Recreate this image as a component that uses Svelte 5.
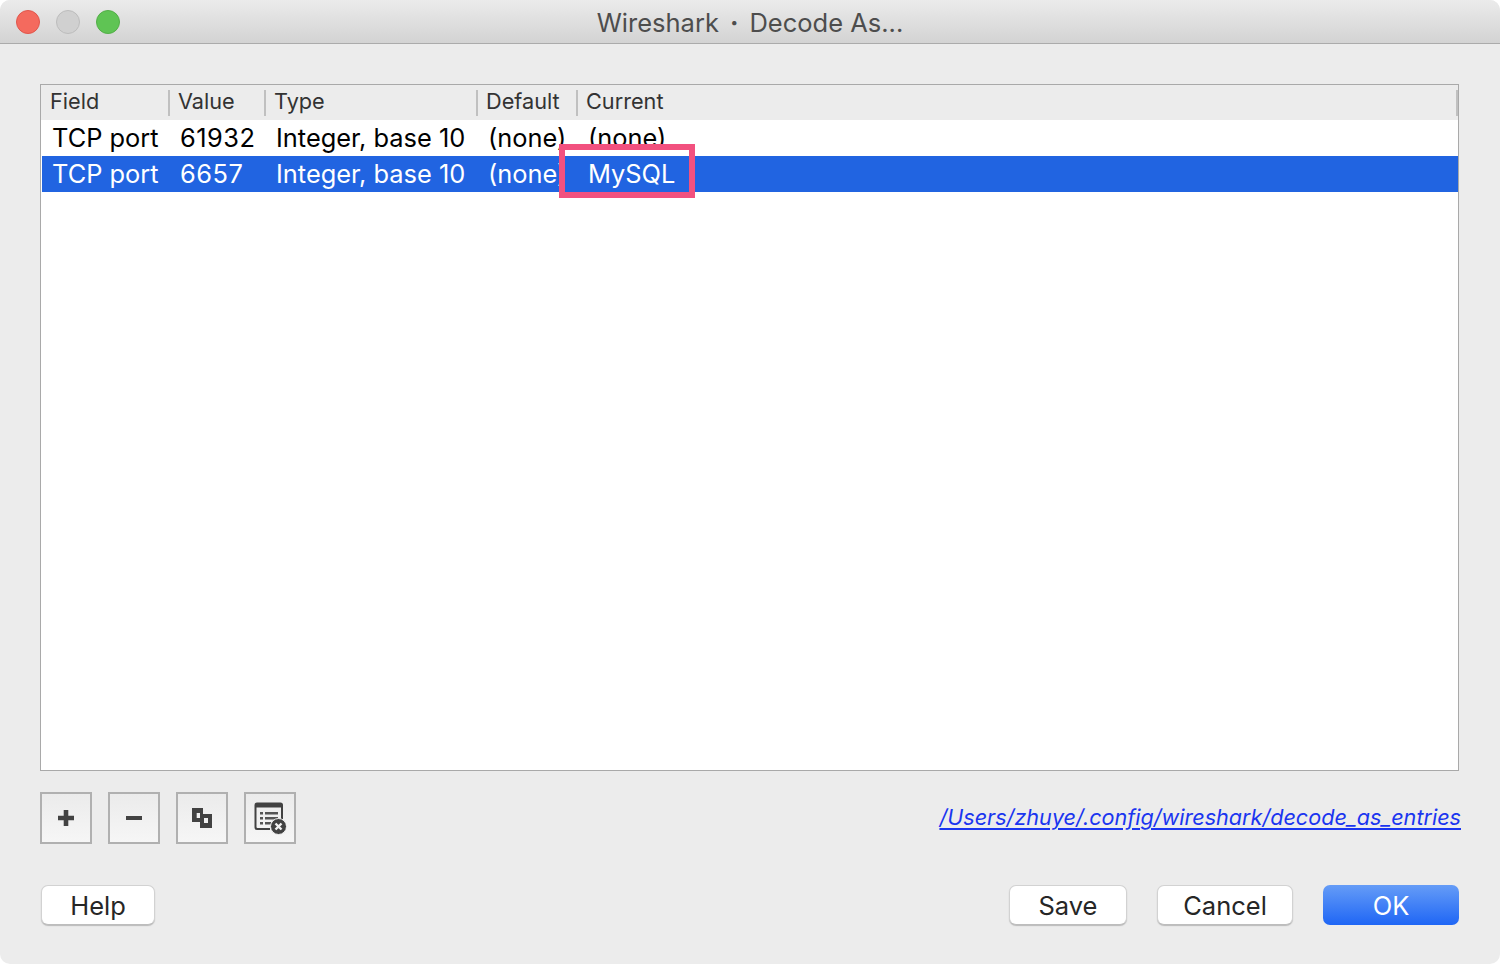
<script>
	const columns = ['Field', 'Value', 'Type', 'Default', 'Current'];
	const rows = [
		{ field: 'TCP port', value: '61932', type: 'Integer, base 10', def: '(none)', current: '(none)', selected: false },
		{ field: 'TCP port', value: '6657', type: 'Integer, base 10', def: '(none)', current: 'MySQL', selected: true }
	];
</script>

<div class="window">
	<header class="titlebar">
		<div class="lights">
			<span class="light red"></span>
			<span class="light grey"></span>
			<span class="light green"></span>
		</div>
		<div class="title">Wireshark<span class="dot">·</span>Decode As...</div>
	</header>

	<main class="content">
		<div class="table">
			<div class="head grid">
				{#each columns as col}
					<div class="th">{col}</div>
				{/each}
			</div>
			{#each rows as row}
				<div class="row grid" class:selected={row.selected}>
					<div class="td">{row.field}</div>
					<div class="td num">{row.value}</div>
					<div class="td">{row.type}</div>
					<div class="td">{row.def}</div>
					<div class="td">{row.current}</div>
				</div>
			{/each}
			<div class="callout"></div>
		</div>

		<div class="tools">
			<button class="tool" aria-label="Add">
				<svg width="18" height="18" viewBox="0 0 18 18"><path d="M6.700 1h4.600v5.700H17v4.600h-5.700V17H6.700v-5.700H1V6.700h5.700z" fill="#424242"/></svg>
			</button>
			<button class="tool" aria-label="Remove">
				<svg width="18" height="18" viewBox="0 0 18 18"><rect x="1" y="7" width="16" height="4" fill="#424242"/></svg>
			</button>
			<button class="tool" aria-label="Copy">
				<svg width="22" height="24" viewBox="0 0 22 24"><path fill-rule="evenodd" d="M1 2h11v6h9v14H9v-6H1zM5.700 7v5H9V8h0V7zM13 12v5h4v-5z" fill="#424242"/></svg>
			</button>
			<button class="tool" aria-label="Clear">
				<svg width="34" height="34" viewBox="0 0 34 34">
					<path d="M4 1.500h23.500a2.500 2.500 0 0 1 2.500 2.500V18h-2V6.500H3.500V26a1 1 0 0 0 1 1H17v2H4a2.500 2.500 0 0 1-2.500-2.500V4A2.500 2.500 0 0 1 4 1.500z" fill="#424242"/>
					<path d="M7 11h3v2.500H7zM12 11h13v2.500H12zM7 16h3v2.500H7zM12 16h13v2.500H12zM7 21h3v2.500H7zM12 21h6v2.500h-6z" fill="#555"/>
					<circle cx="25.500" cy="25.500" r="8" fill="#424242" stroke="#f2f2f2" stroke-width="1"/>
					<path d="M22.500 22.500l6 6M28.500 22.500l-6 6" stroke="#f2f2f2" stroke-width="2.400" fill="none"/>
				</svg>
			</button>
			<a class="path" href="#entries">/Users/zhuye/.config/wireshark/decode_as_entries</a>
		</div>

		<div class="actions">
			<button class="btn help">Help</button>
			<div class="spacer"></div>
			<button class="btn save">Save</button>
			<button class="btn cancel">Cancel</button>
			<button class="btn ok">OK</button>
		</div>
	</main>
</div>

<style>
	:global(body) {
		margin: 0;
		background: #fff;
	}

	.window {
		width: 1500px;
		height: 964px;
		background: #ececec;
		border-radius: 10px;
		overflow: hidden;
		font-family: Inter, "Liberation Sans", sans-serif;
		color: #262626;
	}

	.titlebar {
		position: relative;
		height: 43px;
		display: flex;
		align-items: center;
		justify-content: center;
		background: linear-gradient(#ebebeb, #d3d3d3);
		border-bottom: 1px solid #ababab;
	}

	.lights {
		position: absolute;
		left: 16px;
		top: 10px;
		display: flex;
		gap: 16px;
	}

	.light {
		width: 24px;
		height: 24px;
		border-radius: 50%;
		box-sizing: border-box;
		border: 1px solid;
	}

	.red {
		background: #f46a5e;
		border-color: #e0564c;
	}

	.grey {
		background: #d0d0d0;
		border-color: #bcbcbc;
	}

	.green {
		background: #5fc454;
		border-color: #53ae48;
	}

	.title {
		font-size: 25.500px;
		padding-top: 2px;
		color: #4d4d4d;
	}

	.dot {
		margin: 0 11px;
		font-weight: 700;
	}

	.content {
		padding: 40px 41px 0 40px;
	}

	.table {
		position: relative;
		box-sizing: border-box;
		width: 1419px;
		height: 687px;
		background: #fff;
		border: 1px solid #a9a9a9;
	}

	.grid {
		display: grid;
		grid-template-columns: 129px 96px 212px 100px 1fr;
	}

	.head {
		height: 35px;
		background: #ececec;
		align-items: center;
	}

	.th {
		height: 26px;
		line-height: 22px;
		padding-left: 8px;
		font-size: 21.700px;
		color: #333;
		border-right: 2px solid #c0c0c0;
	}

	.th:first-child {
		padding-left: 9px;
	}

	.row {
		height: 36px;
		margin-left: 1px;
		color: #000;
		background: #fff;
	}

	.td {
		padding-left: 9px;
		font-size: 25.400px;
		line-height: 36px;
		white-space: nowrap;
		overflow: hidden;
	}

	.td:first-child {
		padding-left: 10px;
	}

	.num {
		letter-spacing: 0.5px;
	}

	.selected {
		background: #2164e1;
		color: #fff;
	}

	.callout {
		position: absolute;
		left: 518px;
		top: 59px;
		width: 136px;
		height: 54px;
		box-sizing: border-box;
		border: 6px solid #f2517f;
	}

	.tools {
		display: flex;
		align-items: center;
		gap: 16px;
		margin-top: 21px;
		height: 52px;
	}

	.tool {
		width: 52px;
		height: 52px;
		padding: 0;
		display: flex;
		align-items: center;
		justify-content: center;
		background: linear-gradient(#ebebeb, #f6f6f6);
		border: 2px solid #b0b0b0;
		border-radius: 0;
	}

	.path {
		margin-left: auto;
		margin-right: -2px;
		padding-bottom: 2px;
		font-size: 21.600px;
		font-style: italic;
		color: #1a35f0;
		text-decoration-thickness: 2px;
		text-underline-offset: 3px;
	}

	.actions {
		display: flex;
		gap: 30px;
		margin-top: 41px;
		padding-left: 1px;
	}

	.spacer {
		flex: 1;
	}

	.btn {
		height: 40px;
		padding: 0;
		font-family: inherit;
		font-size: 25.500px;
		color: #262626;
		background: #fff;
		border: 1px solid #d2d2d2;
		border-bottom-color: #bdbdbd;
		border-radius: 7px;
		box-shadow: 0 1px 1px #bbb;
	}

	.help {
		width: 114px;
	}

	.save {
		width: 118px;
	}

	.cancel {
		width: 136px;
	}

	.ok {
		width: 136px;
		color: #fff;
		background: linear-gradient(#659cf7, #1f66f5);
		border: none;
		box-shadow: none;
	}
</style>
